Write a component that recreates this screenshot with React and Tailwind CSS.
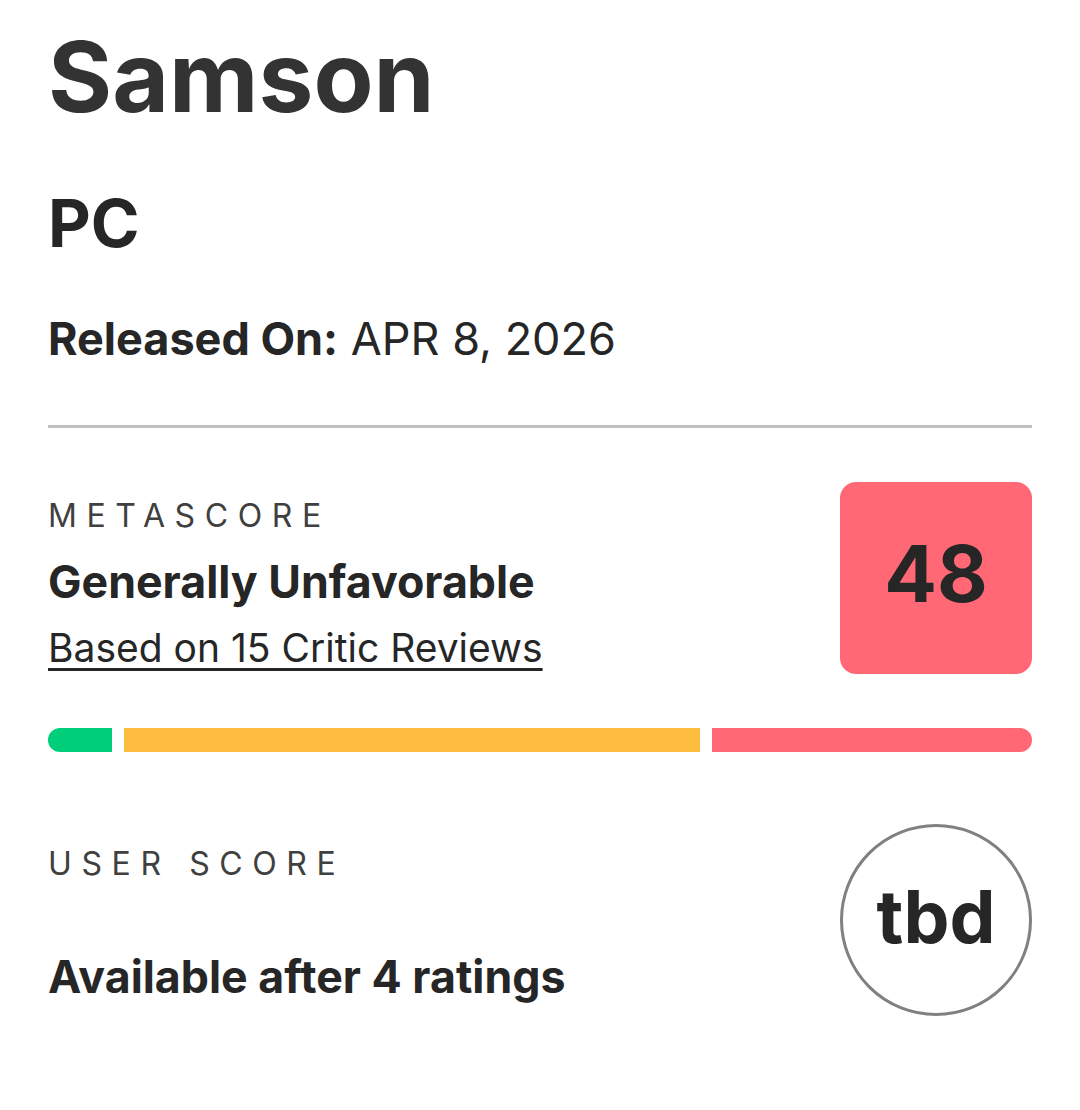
import React from "react";

const ScoreBar = () => (
    <div className="flex gap-[12px] h-[24px] mt-[54px]">
        <div className="w-[64px] bg-[#00ce7a] rounded-l-full" />
        <div className="flex-1 bg-[#ffbd3f]" />
        <div className="w-[320px] bg-[#ff6874] rounded-r-full" />
    </div>
);

const App = () => {
    return (
        <div className="bg-white min-h-[1110px] px-[48px] pt-[22px] text-[#262626] font-['Inter',sans-serif]">
            <h1 className="text-[98px] leading-[110px] font-bold text-[#333333]">Samson</h1>

            <h2 className="mt-[51px] text-[66px] leading-[80px] font-bold">PC</h2>

            <p className="mt-[48px] text-[45px] leading-[56px]">
                <span className="font-bold">Released On:</span> APR 8, 2026
            </p>

            <div className="mt-[58px] h-[3px] bg-[#c0c0c0]" />

            <div className="flex justify-between items-start mt-[54px]">
                <div className="pt-[14px]">
                    <div className="text-[32px] leading-[40px] tracking-[0.3em] text-[#404040]">METASCORE</div>
                    <div className="mt-[21px] text-[44.7px] leading-[50px] font-bold">Generally Unfavorable</div>
                    <a href="#" className="block mt-[17px] text-[39px] leading-[48px] underline underline-offset-[6px] decoration-[3px] text-[#262626]">
                        Based on 15 Critic Reviews
                    </a>
                </div>
                <div className="w-[192px] h-[192px] rounded-[16px] bg-[#ff6874] flex items-center justify-center pb-[9px]">
                    <span className="text-[78px] font-bold leading-none">48</span>
                </div>
            </div>

            <ScoreBar />

            <div className="flex justify-between items-start mt-[72px]">
                <div className="pt-[20px]">
                    <div className="text-[32px] leading-[40px] tracking-[0.3em] text-[#404040]">USER SCORE</div>
                    <div className="mt-[68px] text-[44.7px] leading-[50px] font-bold">Available after 4 ratings</div>
                </div>
                <div className="w-[192px] h-[192px] rounded-full border-[3px] border-[#808080] flex items-center justify-center pb-[7px]">
                    <span className="text-[73px] font-bold leading-none">tbd</span>
                </div>
            </div>
        </div>
    );
};

export default App;
